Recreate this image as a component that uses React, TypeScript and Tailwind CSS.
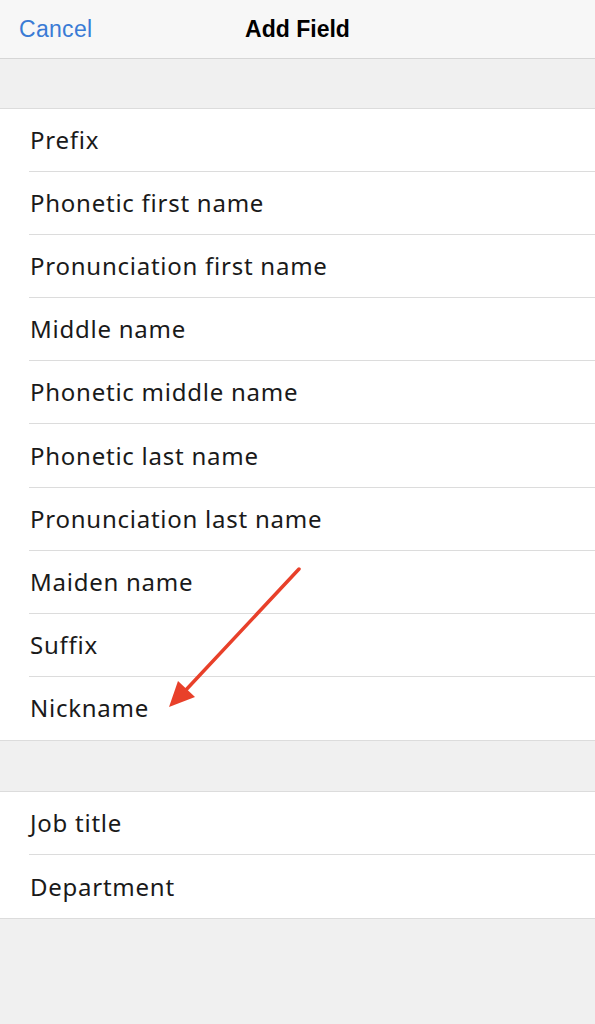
const nameFields = [
  "Prefix",
  "Phonetic first name",
  "Pronunciation first name",
  "Middle name",
  "Phonetic middle name",
  "Phonetic last name",
  "Pronunciation last name",
  "Maiden name",
  "Suffix",
  "Nickname",
];

const workFields = ["Job title", "Department"];

function FieldGroup({ items }: { items: string[] }) {
  return (
    <div className="bg-white border-y border-[#dcdcdc]">
      {items.map((item, i) => (
        <div key={item} className="pl-[29px]">
          <div
            className={
              "h-[63.1px] flex items-center text-[24px] tracking-[0.75px] text-[#1a1a1a] " +
              (i < items.length - 1 ? "border-b border-[#dcdcdc]" : "")
            }
            style={{ fontFamily: '"Noto Sans", "Liberation Sans", sans-serif' }}
          >
            <span className="pl-px">{item}</span>
          </div>
        </div>
      ))}
    </div>
  );
}

export default function App() {
  return (
    <div
      className="relative w-[595px] h-[1024px] bg-[#f0f0f0] overflow-hidden"
      style={{ fontFamily: '"Liberation Sans", Arial, sans-serif' }}
    >
      <header className="h-[59px] bg-[#f7f7f7] border-b border-[#d6d6d6] flex items-center relative">
        <span className="pl-[19px] text-[23px] tracking-[0.3px] text-[#3a7bd5]">Cancel</span>
        <span className="absolute left-0 right-0 text-center text-[23px] font-bold text-black pointer-events-none">
          Add Field
        </span>
      </header>

      <div className="h-[49px]" />
      <FieldGroup items={nameFields} />
      <div className="h-[50px]" />
      <FieldGroup items={workFields} />

      {/* red annotation arrow */}
      <svg
        className="absolute left-0 top-0"
        width="595"
        height="1024"
        viewBox="0 0 595 1024"
      >
        <line
          x1="299"
          y1="569"
          x2="184"
          y2="692"
          stroke="#e8402a"
          strokeWidth="3.5"
          strokeLinecap="round"
        />
        <polygon points="169,707 178,681 195,697" fill="#e8402a" />
      </svg>
    </div>
  );
}
